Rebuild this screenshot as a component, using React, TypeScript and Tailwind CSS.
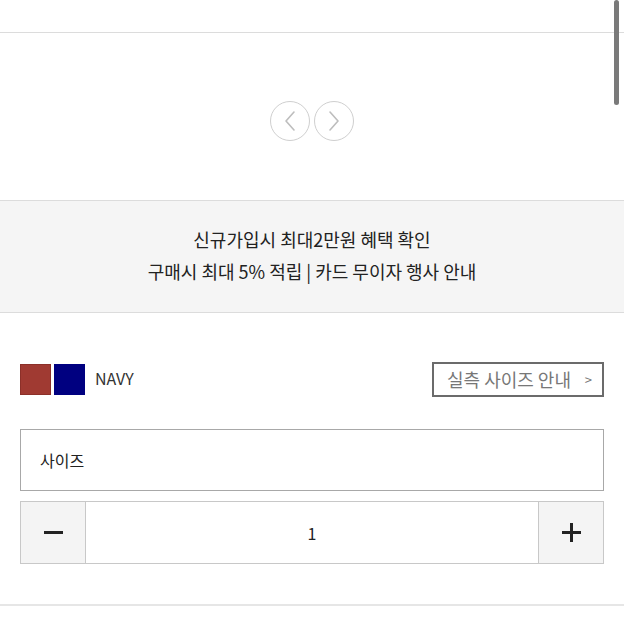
import React from "react";

export default function App() {
  const font = { fontFamily: '"Noto Sans CJK KR", "Noto Sans", sans-serif' };
  return (
    <div className="relative w-[624px] h-[624px] overflow-hidden bg-white text-[#222]" style={font}>
      <div className="h-[32px]" />
      <div className="border-t border-[#dcdcdc]" />
      <div className="flex justify-center gap-[4px] pt-[68px] pb-[59px]">
        <div className="w-[40px] h-[40px] rounded-full border-[1.5px] border-[#cfcfcf] flex items-center justify-center">
          <svg width="16" height="24" viewBox="0 0 16 24" fill="none">
            <path d="M12 3 L4 12 L12 21" stroke="#bdbdbd" strokeWidth="1.6" strokeLinecap="round" strokeLinejoin="round" />
          </svg>
        </div>
        <div className="w-[40px] h-[40px] rounded-full border-[1.5px] border-[#cfcfcf] flex items-center justify-center">
          <svg width="16" height="24" viewBox="0 0 16 24" fill="none">
            <path d="M4 3 L12 12 L4 21" stroke="#bdbdbd" strokeWidth="1.6" strokeLinecap="round" strokeLinejoin="round" />
          </svg>
        </div>
      </div>
      <div className="border-y border-[#dcdcdc] bg-[#f5f5f5] h-[113px] pt-[22px] text-center text-[18px] leading-[32px] text-[#222]">
        <div>신규가입시 최대2만원 혜택 확인</div>
        <div>구매시 최대 5% 적립 | 카드 무이자 행사 안내</div>
      </div>
      <div className="px-[20px] pt-[49px]">
        <div className="flex items-center justify-between h-[35px]">
          <div className="flex items-center">
            <div className="w-[31px] h-[31px] bg-[#a03a32] border border-[#8c3029]" />
            <div className="w-[31px] h-[31px] bg-[#000080] ml-[3px]" />
            <span className="ml-[10px] text-[16px] text-[#333] -mt-[4px]">NAVY</span>
          </div>
          <div className="w-[172px] h-[35px] border-2 border-[#6b6b6b] flex items-center pl-[13px] pr-[10px] justify-between text-[#777]">
            <span className="text-[18px]">실측 사이즈 안내</span>
            <span className="text-[13px]">&gt;</span>
          </div>
        </div>
        <div className="mt-[32px] h-[62px] border border-[#a8a8a8] flex items-center pl-[19px] text-[16px] text-[#222]">
          사이즈
        </div>
        <div className="mt-[10px] h-[63px] flex border border-[#c8c8c8]">
          <div className="w-[65px] bg-[#f4f4f4] border-r border-[#c8c8c8] flex items-center justify-center">
            <div className="w-[19px] h-[3px] bg-[#222]" />
          </div>
          <div className="flex-1 flex items-center justify-center text-[16px] text-[#222]">1</div>
          <div className="w-[65px] bg-[#f4f4f4] border-l border-[#c8c8c8] flex items-center justify-center">
            <div className="relative w-[19px] h-[19px]">
              <div className="absolute left-0 top-[8px] w-[19px] h-[3px] bg-[#222]" />
              <div className="absolute top-0 left-[8px] w-[3px] h-[19px] bg-[#222]" />
            </div>
          </div>
        </div>
      </div>
      <div className="mt-[40px] border-t-2 border-[#e6e6e6]" />
      <div className="absolute right-[5px] top-0 w-[5px] h-[105px] rounded-full bg-[#7a7a7a]" />
    </div>
  );
}
